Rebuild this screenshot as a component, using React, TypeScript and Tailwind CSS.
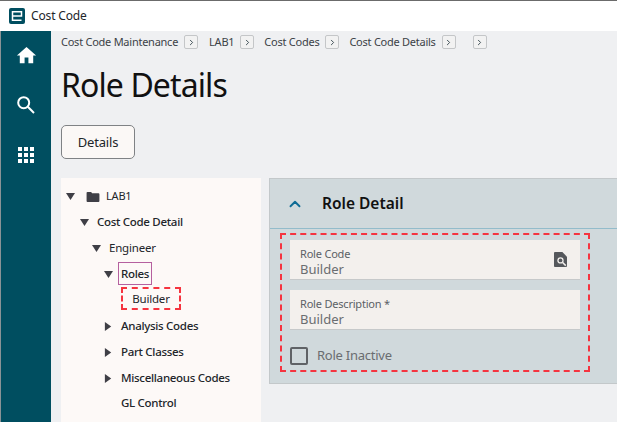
import { ChevronRight, ChevronUp } from "lucide-react";

const CRUMBS = [
  { label: "Cost Code Maintenance", next: "ml-[11px]" },
  { label: "LAB1", next: "ml-[10px]" },
  { label: "Cost Codes", next: "ml-[10px]" },
  { label: "Cost Code Details", next: "ml-[17px]" },
];

function CrumbButton() {
  return (
    <span className="flex size-[14px] items-center justify-center rounded-[2px] border border-[#c4c6c8] bg-[#f2f2f2]">
      <ChevronRight className="size-[9px] text-[#37474f]" strokeWidth={2.5} aria-hidden />
    </span>
  );
}

function Caret({ open }: { open: boolean }) {
  return (
    <svg viewBox="0 0 10 10" className="size-[9px] shrink-0 text-[#3f3f46]" aria-hidden>
      <path d={open ? "M0 1h10L5 9z" : "M1 0l7 5-7 5z"} fill="currentColor" />
    </svg>
  );
}

function TreeRow({
  indent,
  open,
  bold,
  children,
}: {
  indent: string;
  open?: boolean;
  bold?: boolean;
  children: React.ReactNode;
}) {
  return (
    <div className={`flex h-[26px] items-center ${indent}`}>
      <span className="flex w-[17px] shrink-0 items-center">
        {open !== undefined && <Caret open={open} />}
      </span>
      <span
        className={`text-[#22252a] ${
          bold ? "text-[11.5px] font-medium tracking-[-0.3px]" : "text-[11.5px] tracking-[-0.2px]"
        }`}
      >
        {children}
      </span>
    </div>
  );
}

function Field({ label, value, icon }: { label: string; value: string; icon?: boolean }) {
  return (
    <div className="flex h-[40px] items-center justify-between border-b border-[#c6c9ca] bg-[#f3f0ed] pl-[10px] pr-[13px]">
      <div className="flex flex-col pt-[4px]">
        <span className="text-[11px] leading-[15px] tracking-[-0.2px] text-[#5b6065]">{label}</span>
        <span className="text-[13px] leading-[17px] text-[#6a6d70]">{value}</span>
      </div>
      {icon && (
        <svg viewBox="0 0 14 16" className="h-[15px] w-[13px]" aria-hidden>
          <path d="M1 0h8l5 5v10a1 1 0 0 1-1 1H1a1 1 0 0 1-1-1V1a1 1 0 0 1 1-1z" fill="#55585c" />
          <circle cx="7" cy="9" r="3.4" fill="#f3f0ed" />
          <circle cx="7" cy="9" r="2" fill="#55585c" />
          <path d="M9.3 11.2l3.4 3.4" stroke="#f3f0ed" strokeWidth="1.6" />
        </svg>
      )}
    </div>
  );
}

export default function App() {
  return (
    <div className="flex h-[422px] w-[617px] flex-col overflow-hidden border-t border-[#6b6b6b] bg-[#eff0f2] font-['Noto_Sans',sans-serif]">
      <header className="flex h-[30px] shrink-0 items-center gap-[6px] bg-white pl-[9px]">
        <span className="flex size-[16px] items-center justify-center rounded-[2px] bg-[#004e60]">
          <svg viewBox="0 0 16 16" className="size-[16px]" aria-hidden>
            <path d="M3.5 8h9V3.8h-9v8.4h9" fill="none" stroke="#fff" strokeWidth="1.5" />
          </svg>
        </span>
        <span className="text-[12px] tracking-[-0.15px] text-[#22252a]">Cost Code</span>
      </header>

      <div className="flex min-h-0 flex-1">
        <nav className="flex w-[51px] shrink-0 flex-col items-center border-l border-[#8a9396] bg-[#004e60] pt-[13px]">
          <svg viewBox="0 0 24 24" className="size-[23px]" aria-hidden>
            <path d="M10 20v-6h4v6h5v-8h3L12 3 2 12h3v8z" fill="#fff" />
          </svg>
          <svg viewBox="0 0 18 18" className="mt-[29px] size-[18px]" fill="none" stroke="#fff" strokeWidth="2" aria-hidden>
            <circle cx="6.7" cy="6.7" r="5.5" />
            <path d="M10.8 10.8L17 17" />
          </svg>
          <div className="mt-[33px] grid grid-cols-3 gap-[2px]">
            {Array.from({ length: 9 }).map((_, i) => (
              <span key={i} className="size-[4px] bg-white" />
            ))}
          </div>
        </nav>

        <main className="min-w-0 flex-1 pl-[10px]">
          <div className="flex h-[22px] items-center">
            {CRUMBS.map((c) => (
              <div key={c.label} className="flex items-center">
                <span className="text-[11px] tracking-[-0.25px] whitespace-nowrap text-[#3c4247]">{c.label}</span>
                <span className="ml-[6px]"><CrumbButton /></span>
                <span className={c.next} />
              </div>
            ))}
            <CrumbButton />
          </div>

          <h1 className="mt-[10px] text-[32px] leading-[44px] tracking-[-0.9px] text-[#111]">Role Details</h1>

          <button className="mt-[18px] flex h-[34px] w-[74px] items-center justify-center rounded-[5px] border border-[#7f8285] bg-[#fbf8f6] pt-[1px] text-[13px] tracking-[-0.2px] text-[#22252a]">
            Details
          </button>

          <div className="mt-[19px] flex gap-[8px]">
            <section className="h-[244px] w-[200px] shrink-0 bg-[#fdf9f7] pl-[5px] pt-[5px]">
              <div className="flex h-[26px] items-center">
                <span className="w-[20px]"><Caret open /></span>
                <svg viewBox="0 0 14 12" className="mr-[6px] h-[11px] w-[14px] text-[#3f3f46]" aria-hidden>
                  <path d="M0 2a1 1 0 0 1 1-1h4l1 1.5h7a1 1 0 0 1 1 1V11a1 1 0 0 1-1 1H1a1 1 0 0 1-1-1z" fill="currentColor" />
                </svg>
                <span className="text-[11px] tracking-[-0.2px] text-[#22252a]">LAB1</span>
              </div>
              <TreeRow indent="pl-[14px]" open bold>Cost Code Detail</TreeRow>
              <TreeRow indent="pl-[26px]" open>Engineer</TreeRow>
              <TreeRow indent="pl-[38px]" open bold>
                <span className="-ml-[3px] border border-[#b5609f] px-[2px] py-[3px]">Roles</span>
              </TreeRow>
              <div className="pl-[55px]">
                <span className="flex h-[23px] w-[60px] items-center justify-center border-2 border-dashed border-[#f5343f] text-[11.5px] tracking-[-0.2px] text-[#22252a]">
                  Builder
                </span>
              </div>
              <TreeRow indent="mt-[3px] pl-[38px]" open={false} bold>Analysis Codes</TreeRow>
              <TreeRow indent="pl-[38px]" open={false} bold>Part Classes</TreeRow>
              <TreeRow indent="pl-[38px]" open={false} bold>Miscellaneous Codes</TreeRow>
              <TreeRow indent="-mt-[1px] pl-[38px]" bold>GL Control</TreeRow>
            </section>

            <section className="h-[206px] min-w-0 flex-1 border border-r-0 border-[#c3c8ca] bg-[#d0d9dc]">
              <div className="flex h-[50px] items-center border-b border-[#93bccb] pl-[16px] pt-[1px]">
                <ChevronUp className="size-[18px] text-[#0f6c95]" strokeWidth={2.5} aria-hidden />
                <h2 className="ml-[18px] text-[15.5px] font-semibold text-[#111]">Role Detail</h2>
              </div>
              <div className="ml-[10px] mt-[4px] flex h-[139px] w-[310px] flex-col border-2 border-dashed border-[#f5343f] px-[8px] pt-[5px]">
                <Field label="Role Code" value="Builder" icon />
                <div className="mt-[10px]">
                  <Field label="Role Description *" value="Builder" />
                </div>
                <label className="mt-[16px] flex items-center gap-[9px]">
                  <span className="size-[18px] rounded-[2px] border-2 border-[#5f6266]" />
                  <span className="text-[13px] tracking-[-0.25px] text-[#6a6d70]">Role Inactive</span>
                </label>
              </div>
            </section>
          </div>
        </main>
      </div>
    </div>
  );
}
